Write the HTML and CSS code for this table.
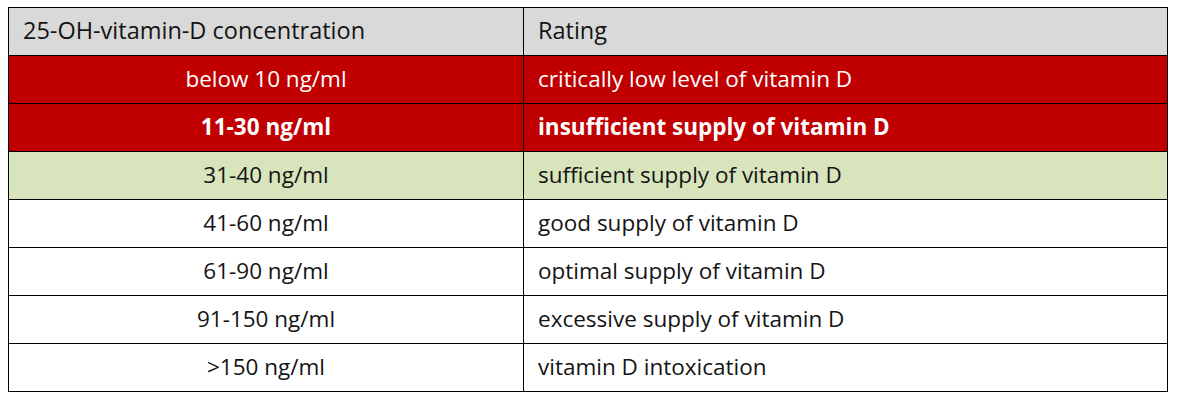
FILE: index.html
```html
<!DOCTYPE html>
<html>
<head>
<meta charset="utf-8">
<link rel="stylesheet" href="styles.css">
</head>
<body>
<table class="vit">
  <thead>
    <tr><th class="c1">25-OH-vitamin-D concentration</th><th class="c2">Rating</th></tr>
  </thead>
  <tbody>
    <tr class="red"><td class="c1">below 10 ng/ml</td><td class="c2">critically low level of vitamin D</td></tr>
    <tr class="red bold"><td class="c1">11-30 ng/ml</td><td class="c2">insufficient supply of vitamin D</td></tr>
    <tr class="green"><td class="c1">31-40 ng/ml</td><td class="c2">sufficient supply of vitamin D</td></tr>
    <tr><td class="c1">41-60 ng/ml</td><td class="c2">good supply of vitamin D</td></tr>
    <tr><td class="c1">61-90 ng/ml</td><td class="c2">optimal supply of vitamin D</td></tr>
    <tr><td class="c1">91-150 ng/ml</td><td class="c2">excessive supply of vitamin D</td></tr>
    <tr><td class="c1">&gt;150 ng/ml</td><td class="c2">vitamin D intoxication</td></tr>
  </tbody>
</table>
</body>
</html>
```
FILE: styles.css
```css
html, body { margin: 0; padding: 0; background: #fff; }
body { padding: 7px 0 0 8px; }
.vit {
  border-collapse: collapse;
  width: 1160px;
  font-family: "Open Sans", "Liberation Sans", Arial, sans-serif;
  font-size: 22.5px;
  line-height: 1.2;
  color: #141414;
  table-layout: fixed;
}
.vit th, .vit td {
  border: 1px solid #000;
  height: 48px;
  padding: 0 14px 2px;
  vertical-align: middle;
  font-weight: normal;
  box-sizing: border-box;
}
.vit th { background: #d9d9d9; text-align: left; font-size: 23.5px; }
.vit th.c1 { width: 515px; }
.vit td.c1 { text-align: center; }
.vit td.c2 { text-align: left; }
.red td { background: #c00000; color: #fff; }
.bold td { font-weight: 700; }
.green td { background: #d8e4bc; }
```
